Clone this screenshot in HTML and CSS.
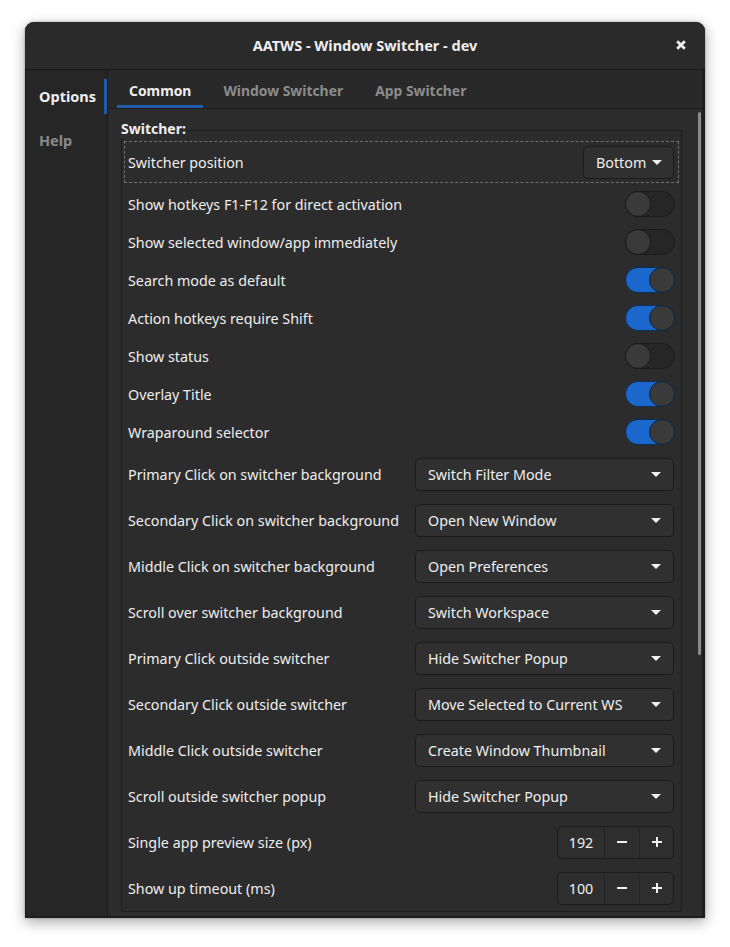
FILE: index.html
```html
<!DOCTYPE html>
<html lang="en">
<head>
<meta charset="utf-8">
<title>AATWS - Window Switcher - dev</title>
<link rel="stylesheet" href="styles.css">
</head>
<body>
<div class="window">
  <header class="headerbar">
    <div class="hb-spacer"></div>
    <div class="title">AATWS - Window Switcher - dev</div>
    <div class="hb-end">
      <button class="close" aria-label="Close">
        <svg width="10" height="10" viewBox="0 0 10 10"><path d="M1.2 1.2 L8.8 8.8 M8.8 1.2 L1.2 8.8" stroke="#eeeeee" stroke-width="2.8" stroke-linecap="butt"/></svg>
      </button>
    </div>
  </header>
  <div class="main">
    <nav class="sidebar">
      <div class="side-item active">Options</div>
      <div class="side-item">Help</div>
    </nav>
    <section class="content">
      <div class="tabs">
        <div class="tab active">Common</div>
        <div class="tab">Window Switcher</div>
        <div class="tab">App Switcher</div>
      </div>
      <div class="scroll">
        <div class="frame-label">Switcher:</div>
        <div class="frame">
          <div class="row row-tall focused">
            <span class="label">Switcher position</span>
            <div class="button menu-btn"><span>Bottom</span><i class="arrow"></i></div>
          </div>
          <div class="row row-switch">
            <span class="label">Show hotkeys F1-F12 for direct activation</span>
            <div class="switch"><i class="knob"></i></div>
          </div>
          <div class="row row-switch">
            <span class="label">Show selected window/app immediately</span>
            <div class="switch"><i class="knob"></i></div>
          </div>
          <div class="row row-switch">
            <span class="label">Search mode as default</span>
            <div class="switch on"><i class="knob"></i></div>
          </div>
          <div class="row row-switch">
            <span class="label">Action hotkeys require Shift</span>
            <div class="switch on"><i class="knob"></i></div>
          </div>
          <div class="row row-switch">
            <span class="label">Show status</span>
            <div class="switch"><i class="knob"></i></div>
          </div>
          <div class="row row-switch">
            <span class="label">Overlay Title</span>
            <div class="switch on"><i class="knob"></i></div>
          </div>
          <div class="row row-switch">
            <span class="label">Wraparound selector</span>
            <div class="switch on"><i class="knob"></i></div>
          </div>
          <div class="row row-tall">
            <span class="label">Primary Click on switcher background</span>
            <div class="button combo"><span>Switch Filter Mode</span><i class="arrow"></i></div>
          </div>
          <div class="row row-tall">
            <span class="label">Secondary Click on switcher background</span>
            <div class="button combo"><span>Open New Window</span><i class="arrow"></i></div>
          </div>
          <div class="row row-tall">
            <span class="label">Middle Click on switcher background</span>
            <div class="button combo"><span>Open Preferences</span><i class="arrow"></i></div>
          </div>
          <div class="row row-tall">
            <span class="label">Scroll over switcher background</span>
            <div class="button combo"><span>Switch Workspace</span><i class="arrow"></i></div>
          </div>
          <div class="row row-tall">
            <span class="label">Primary Click outside switcher</span>
            <div class="button combo"><span>Hide Switcher Popup</span><i class="arrow"></i></div>
          </div>
          <div class="row row-tall">
            <span class="label">Secondary Click outside switcher</span>
            <div class="button combo"><span>Move Selected to Current WS</span><i class="arrow"></i></div>
          </div>
          <div class="row row-tall">
            <span class="label">Middle Click outside switcher</span>
            <div class="button combo"><span>Create Window Thumbnail</span><i class="arrow"></i></div>
          </div>
          <div class="row row-tall">
            <span class="label">Scroll outside switcher popup</span>
            <div class="button combo"><span>Hide Switcher Popup</span><i class="arrow"></i></div>
          </div>
          <div class="row row-tall">
            <span class="label">Single app preview size (px)</span>
            <div class="spin">
              <span class="spin-value">192</span>
              <span class="spin-btn"><svg width="10" height="10" viewBox="0 0 10 10"><path d="M0 5 H10" stroke="#eeeeee" stroke-width="2"/></svg></span>
              <span class="spin-btn"><svg width="10" height="10" viewBox="0 0 10 10"><path d="M0 5 H10 M5 0 V10" stroke="#eeeeee" stroke-width="2"/></svg></span>
            </div>
          </div>
          <div class="row row-tall">
            <span class="label">Show up timeout (ms)</span>
            <div class="spin">
              <span class="spin-value">100</span>
              <span class="spin-btn"><svg width="10" height="10" viewBox="0 0 10 10"><path d="M0 5 H10" stroke="#eeeeee" stroke-width="2"/></svg></span>
              <span class="spin-btn"><svg width="10" height="10" viewBox="0 0 10 10"><path d="M0 5 H10 M5 0 V10" stroke="#eeeeee" stroke-width="2"/></svg></span>
            </div>
          </div>
        </div>
        <div class="scrollbar"></div>
      </div>
    </section>
  </div>
</div>
</body>
</html>
```

FILE: styles.css
```css
* { box-sizing: border-box; }

html, body {
  margin: 0;
  padding: 0;
  background: #ffffff;
}

body {
  font-family: "Noto Sans", "Open Sans", sans-serif;
  font-size: 14.3px;
  color: #eeeeee;
  padding: 22px 0 0 25px;
  height: 947px;
  overflow: hidden;
}

.window {
  width: 680px;
  height: 896px;
  display: flex;
  flex-direction: column;
  border-radius: 9px 9px 0 0;
  background: #2c2c2c;
  box-shadow: 0 4px 14px rgba(0, 0, 0, 0.35), 0 0 2px rgba(0, 0, 0, 0.4);
  overflow: hidden;
}

/* Header bar */
.headerbar {
  height: 48px;
  flex: none;
  display: grid;
  grid-template-columns: 1fr auto 1fr;
  align-items: center;
  background: #2a2a2a;
  border-bottom: 1px solid #1a1a1a;
}

.title {
  font-weight: 700;
  font-size: 14.5px;
  color: #eeeeee;
  padding-bottom: 1px;
}

.hb-end {
  display: flex;
  justify-content: flex-end;
  padding-right: 17px;
}

.close {
  width: 14px;
  height: 14px;
  padding: 0;
  border: 0;
  background: transparent;
  display: flex;
  align-items: center;
  justify-content: center;
  margin-bottom: 1px;
}

/* Main area */
.main {
  flex: 1;
  display: flex;
  min-height: 0;
  border-left: 1px solid #1c1c1c;
  border-right: 3px solid #1e1e1e;
  border-bottom: 2px solid #1e1e1e;
}

.sidebar {
  width: 82px;
  flex: none;
  background: #262626;
  border-right: 1px solid #1b1b1b;
  padding-top: 9px;
  display: flex;
  flex-direction: column;
  gap: 9px;
}

.side-item {
  height: 35px;
  line-height: 35px;
  padding-left: 13px;
  font-size: 14.5px;
  font-weight: 700;
  color: #8a8a8a;
  border-right: 3px solid transparent;
}

.side-item.active {
  color: #eeeeee;
  border-right-color: #1f5ba9;
}

.content {
  flex: 1;
  display: flex;
  flex-direction: column;
  min-width: 0;
  background: #2c2c2c;
}

.tabs {
  height: 39px;
  flex: none;
  display: flex;
  padding-left: 5px;
  background: #292929;
  border-bottom: 1px solid #1b1b1b;
}

.tab {
  margin: 0 4px;
  padding: 3px 12px 0;
  line-height: 35px;
  font-size: 13.9px;
  font-weight: 700;
  color: #8c8c8c;
}

.tab.active {
  color: #eeeeee;
  box-shadow: inset 0 -3px 0 #1f5ba9;
}

/* Scrolled content */
.scroll {
  position: relative;
  flex: 1;
  overflow: hidden;
  padding: 11px 20px 0 13px;
}

.frame-label {
  position: relative;
  width: max-content;
  height: 18px;
  line-height: 18px;
  margin-bottom: -8px;
  font-size: 14px;
  font-weight: 700;
  background: #2c2c2c;
  padding-right: 1px;
}

.frame {
  border: 1px solid #1d1d1d;
  padding-top: 8px;
}

.row {
  display: flex;
  align-items: center;
  justify-content: space-between;
  padding: 0 7px 0 6px;
}

.row-tall { height: 46px; }
.row-switch { height: 38px; }

.row.focused {
  outline: 1px dashed rgba(255, 255, 255, 0.32);
  outline-offset: -3px;
}

.label {
  color: #eeeeee;
  white-space: nowrap;
}

/* Buttons / combos */
.button {
  height: 33px;
  display: flex;
  align-items: center;
  justify-content: space-between;
  padding: 0 12px;
  background: #303030;
  border: 1px solid #1b1b1b;
  border-radius: 5px;
  color: #eeeeee;
  white-space: nowrap;
}

.menu-btn {
  width: 91px;
  gap: 6px;
}

.combo {
  width: 259px;
}

.arrow {
  width: 0;
  height: 0;
  border-left: 5px solid transparent;
  border-right: 5px solid transparent;
  border-top: 5px solid #eeeeee;
  margin-top: 1px;
}

/* Switches */
.switch {
  width: 50px;
  height: 26px;
  border-radius: 13px;
  background: #262626;
  border: 1px solid #1c1c1c;
  display: flex;
  align-items: center;
  margin-right: -1px;
}

.switch .knob {
  width: 26px;
  height: 26px;
  margin: -1px;
  border-radius: 50%;
  background: #3a3a3a;
  border: 1px solid #1a1a1a;
}

.switch.on {
  background: #1b67cc;
  border-color: #0f2d55;
  justify-content: flex-end;
}

.switch.on .knob {
  border-color: #10243f;
  background: #3a3a3a;
}

/* Spin buttons */
.spin {
  width: 117px;
  height: 33px;
  display: flex;
  border: 1px solid #1b1b1b;
  border-radius: 5px;
  background: #2e2e2e;
  overflow: hidden;
}

.spin-value {
  width: 46px;
  display: flex;
  align-items: center;
  justify-content: center;
  color: #eeeeee;
}

.spin-btn {
  flex: 1;
  display: flex;
  align-items: center;
  justify-content: center;
  border-left: 1px solid #262626;
}

.spin-btn:last-child { flex: 0 0 34px; }

.scrollbar {
  position: absolute;
  top: 3px;
  right: 1px;
  width: 3px;
  height: 543px;
  border-radius: 2px;
  background: #8a8a8a;
}
```
